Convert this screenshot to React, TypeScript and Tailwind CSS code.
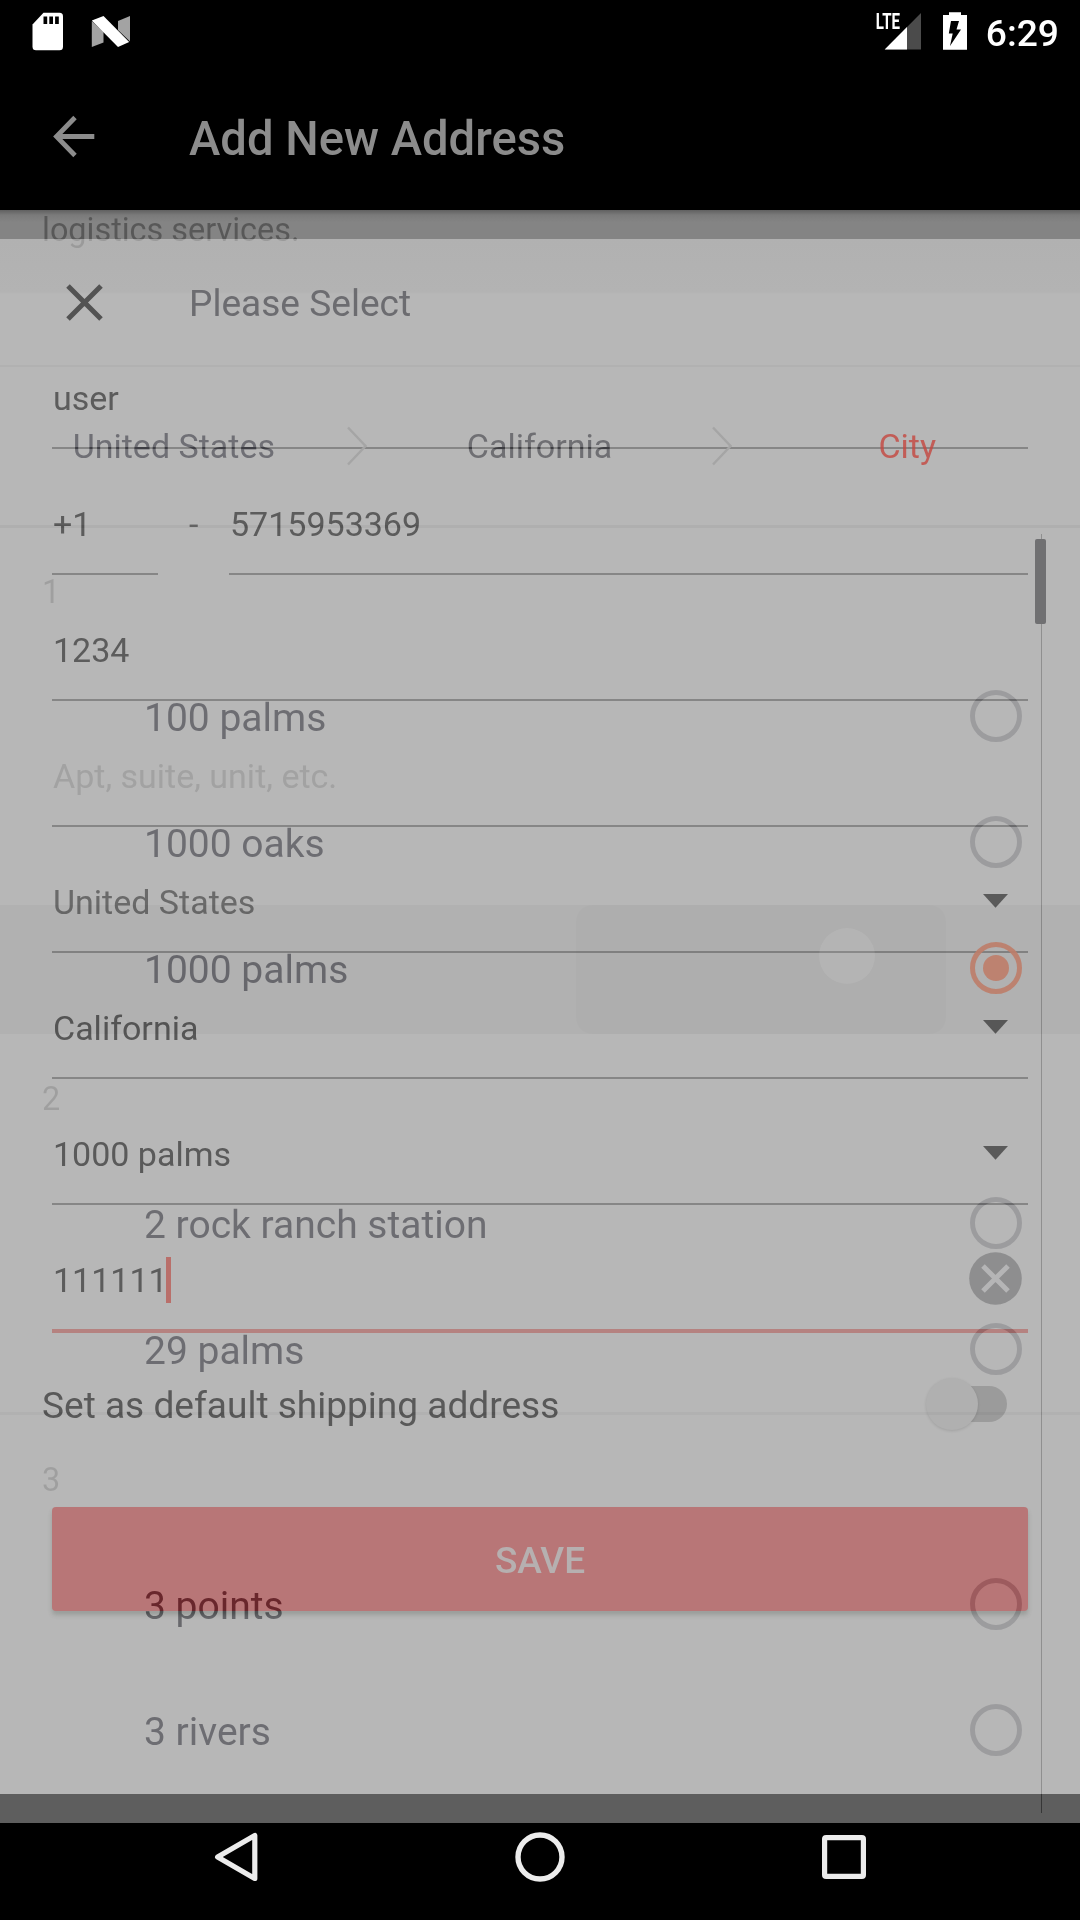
import React from 'react';

/* Status bar */

function StatusBar() {
  return (
    <div className="flex h-[72px] items-start justify-between bg-black">
      <div className="flex pt-[12px] pl-[32px]">
        <svg width="31" height="39" viewBox="0 0 31 39">
          <path d="M11.5 0.7H27.5Q31 0.7 31 4.2V34.8Q31 38.3 27.5 38.3H4Q0.5 38.3 0.5 34.8V12.5Z" fill="#fff" />
          <path d="M11.5 4.5h3.7v7.5h-3.7zM17.3 4.5h3.7v7.5h-3.7zM23.1 4.5h3.7v7.5h-3.7z" fill="#000" />
        </svg>
        <svg className="ml-[28px]" width="40" height="39" viewBox="0 0 40 39">
          <path d="M0.8 9L12.5 20V30.5L0.8 35Z" fill="#a3a3a3" />
          <path d="M27 9L39 4V29.5L27 18Z" fill="#a3a3a3" />
          <path d="M0.8 8.5L12.5 4L38.2 30L27 35Z" fill="#fff" />
        </svg>
      </div>
      <div className="flex items-start pt-[12px] pr-[21px]">
        <svg className="overflow-visible" width="46" height="39" viewBox="0 0 46 39">
          <path d="M45 1V37.5H8.7Z" fill="#4b4b4b" />
          <path d="M31 15V37.5H8.7Z" fill="#fff" />
          <path d="M0 0H25V18.5H0Z" fill="#000" />
          <text x="-0.3" y="17.3" fill="#fff" fontFamily="Roboto, sans-serif" fontWeight="700" fontSize="22.5" textLength="24.3" lengthAdjust="spacingAndGlyphs">LTE</text>
        </svg>
        <svg className="ml-[21px]" width="24" height="39" viewBox="0 0 24 39">
          <path d="M6 0.2H18V3H24V37.7H0V3H6Z" fill="#fff" />
          <path d="M8 9H16L13.5 17.5H18L7 34L9.7 21.5H5.8Z" fill="#000" />
        </svg>
        <span className="ml-[19px] text-[37.2px] leading-[42px] font-medium text-white">6:29</span>
      </div>
    </div>
  );
}

function AppBar() {
  return (
    <div className="flex h-[138px] items-center bg-black pb-[5px] pl-[52px]">
      <svg width="43" height="43" viewBox="0 0 43 43" className="-mt-[4px]" fill="none" stroke="#8c8c8c" strokeWidth="4.8">
        <path d="M42.3 21.5H4.5M23 2.5L4.5 21.5L23 40.5" />
      </svg>
      <h1 className="ml-[94px] text-[47.2px] leading-[54px] font-medium text-[#8c8c8c]">Add New Address</h1>
    </div>
  );
}

/* Address form */

const LINE = 'border-b-2 border-[#868686]';

type FieldProps = { text: string; tone: string; border?: string; caret?: boolean; children?: React.ReactNode };

function Field({ text, tone, border = `h-[126px] ${LINE}`, caret, children }: FieldProps) {
  return (
    <div className={`flex justify-between ${border}`}>
      <div className="flex h-[40px] items-center mt-[55px]">
        <span className={`pl-px text-[34px] leading-[40px] ${tone}`}>{text}</span>
        {caret && <span className="-mt-[1px] -ml-[2px] h-[46px] w-[5px] bg-[#b96f6a]" />}
      </div>
      {children}
    </div>
  );
}

function DropArrow() {
  return (
    <svg className="mt-[67px] mr-[20px]" width="25" height="14" viewBox="0 0 25 14">
      <path d="M0 0H25L12.5 13.7Z" fill="#5a5a5a" />
    </svg>
  );
}

function ClearIcon() {
  return (
    <svg className="mt-[47px] mr-[6px]" width="53" height="53" viewBox="0 0 53 53">
      <circle cx="26.5" cy="26.5" r="26.3" fill="#8e8e8f" />
      <path d="M14 14L39 39M39 14L14 39" stroke="#b5b5b6" strokeWidth="5" />
    </svg>
  );
}

function AddressForm() {
  return (
    <div className="flex flex-col">
      <p className="h-[44px] w-fit bg-[linear-gradient(#585858_29px,#9a9a9a_29px)] bg-clip-text pt-px pl-[42px] text-[32.4px] leading-[38px] text-transparent">
        logistics services.
      </p>
      <div className="mx-[52px] mt-[69px] flex flex-col">
        <Field text="user" tone="text-[#5c5c5c]" />
        <div className="flex h-[126px] items-stretch">
          <div className={`w-[106px] ${LINE} pt-[55px] pl-px text-[34px] leading-[40px] text-[#5c5c5c]`}>+1</div>
          <div className="w-[71px] pt-[55px] pl-[31px] text-[34px] leading-[40px] text-[#6b6b6b]">-</div>
          <div className={`flex-1 ${LINE} pt-[55px] pl-px text-[34px] leading-[40px] text-[#5c5c5c]`}>5715953369</div>
        </div>
        <Field text="1234" tone="text-[#5c5c5c]" />
        <Field text="Apt, suite, unit, etc." tone="text-[#a2a2a2]" />
        <Field text="United States" tone="text-[#6a6a6a]"><DropArrow /></Field>
        <Field text="California" tone="text-[#575757]"><DropArrow /></Field>
        <Field text="1000 palms" tone="text-[#5a5a5a]"><DropArrow /></Field>
        <Field text="111111" tone="text-[#5c5c5c]" border="h-[128px] border-b-4 border-[#b58280]" caret><ClearIcon /></Field>
      </div>
      <div className="mt-[17px] flex h-[112px] items-center justify-between pr-[73px] pl-[42px]">
        <span className="text-[37.05px] leading-[44px] text-[#595959]">Set as default shipping address</span>
        <div className="relative -mt-[4px] h-[36px] w-[71px] rounded-full bg-[#9b9b9b]">
          <span className="absolute -top-[8px] -left-[10px] size-[52px] rounded-full bg-[#b0b0b0] shadow-[0_1px_3px_rgba(0,0,0,0.12)]" />
        </div>
      </div>
      <button className="mx-[52px] mt-[45px] h-[104px] rounded-[4px] bg-[#b87677] pt-[3px] text-[37px] leading-[44px] font-medium text-[#b6b0b0] shadow-[0_4px_4px_rgba(70,85,70,0.25)]">
        SAVE
      </button>
    </div>
  );
}

/* Region picker sheet, mid-fade above the form */

const groups = [
  { label: '1', head: 'h-[128px]', tone: 'text-[#4a4a45]', cities: ['100 palms', '1000 oaks', '1000 palms'] },
  { label: '2', head: 'h-[129px]', tone: 'text-[#4a4a45]', cities: ['2 rock ranch station', '29 palms'] },
  { label: '3', head: 'h-[129px]', tone: 'text-[#4a4a45]', cities: ['3 points', '3 rivers'] },
];

function Radio({ on }: { on: boolean }) {
  if (on) {
    return (
      <span className="relative mr-[58px] mb-[4px] flex size-[52px] items-center justify-center rounded-full border-[5px] border-[#be7d69]/90">
        <span className="size-[26px] rounded-full bg-[#bd8270]" />
      </span>
    );
  }
  return <span className="mr-[58px] mb-[4px] size-[52px] rounded-full border-[5px] border-[#1b1b19] mix-blend-difference" />;
}

function Chevron() {
  return (
    <svg width="20" height="40" viewBox="0 0 20 40" fill="none" stroke="#a5a5a5" strokeWidth="2.4">
      <path d="M1 1.5L18.5 20L1 38.5" />
    </svg>
  );
}

function PickerSheet() {
  return (
    <div className="absolute inset-x-0 top-[29px] flex flex-col">
      <div className="flex h-[128px] items-center border-b-2 border-[#b1b1b1] pt-[2px] pl-[66px]">
        <svg className="-mt-[2px]" width="37" height="37" viewBox="0 0 37 37" stroke="#535353" strokeWidth="5">
          <path d="M2 2L35 35M35 2L2 35" />
        </svg>
        <h2 className="ml-[86px] pt-[2px] text-[37.1px] leading-[44px] text-[#6c6c70]">Please Select</h2>
      </div>
      <div className="flex h-[158px] items-center pl-px text-center text-[34px] leading-[40px]">
        <span className="flex-1 text-[#484842] mix-blend-difference">United States</span>
        <Chevron />
        <span className="flex-1 text-[#484844] mix-blend-difference">California</span>
        <Chevron />
        <span className="flex-1 pl-[2px] text-[#c4463f]/80">City</span>
      </div>
      <div className="-mb-px h-[3px] bg-[#080808] mix-blend-difference" />
      {groups.map((g) => (
        <section key={g.label} className="flex flex-col">
          <div className={`flex items-center pt-[2px] pl-[42px] text-[32.4px] leading-[38px] text-[#181818] mix-blend-difference ${g.head}`}>{g.label}</div>
          {g.cities.map((city) => {
            const on = city === '1000 palms';
            return (
              <div key={city} className="relative flex h-[126px] items-center justify-between pl-[144px]">
                {on && (
                  <>
                    <span className="absolute inset-x-0 -top-[2px] -bottom-px bg-black/3" />
                    <span className="absolute -top-[2px] -bottom-px left-[576px] w-[370px] rounded-[16px] bg-black/1" />
                    <span className="absolute top-[21px] left-[819px] size-[56px] rounded-full bg-white/8" />
                  </>
                )}
                <span className={`text-[39px] leading-[46px] mix-blend-difference ${city === '3 points' ? 'text-[#4f4f4b]' : g.tone}`}>{city}</span>
                <Radio on={on} />
              </div>
            );
          })}
        </section>
      ))}
      <span className="absolute top-[1173px] left-0 h-[3px] w-full bg-[#060606] mix-blend-difference" />
      <span className="absolute top-[295px] left-[1041px] h-[1279px] w-px bg-[#282828] mix-blend-difference" />
      <span className="absolute top-[300px] left-[1035px] h-[85px] w-[11px] rounded-[2px] bg-[#707072]" />
    </div>
  );
}

function NavBar() {
  return (
    <div className="flex h-[97px] items-center justify-center gap-[254px] bg-black pb-[29px]">
      <svg width="50" height="50" viewBox="0 0 50 50" fill="none" stroke="#ececec" strokeWidth="5.2" strokeLinejoin="round">
        <path d="M43.8 3.5V46.5L6.6 25Z" />
      </svg>
      <svg width="50" height="50" viewBox="0 0 50 50" fill="none" stroke="#ececec" strokeWidth="5.4">
        <circle cx="25" cy="25" r="22" />
      </svg>
      <svg width="50" height="50" viewBox="0 0 50 50" fill="none" stroke="#ececec" strokeWidth="5.2">
        <rect x="5.6" y="5.6" width="38.8" height="38.8" rx="1.5" />
      </svg>
    </div>
  );
}

export default function App() {
  return (
    <div className="flex h-[1920px] w-[1080px] flex-col overflow-hidden bg-black font-[Roboto,sans-serif]">
      <StatusBar />
      <AppBar />
      <main className="relative h-[1613px] bg-[linear-gradient(#606060_0px,#7a7a7a_5px,#848484_12px,#848484_29px,#b1b1b1_29px,#b3b3b3_82px,#b7b7b7_84px,#b7b7b7_1584px,#5e5e5e_1584px)]">
        <AddressForm />
        <PickerSheet />
      </main>
      <NavBar />
    </div>
  );
}
